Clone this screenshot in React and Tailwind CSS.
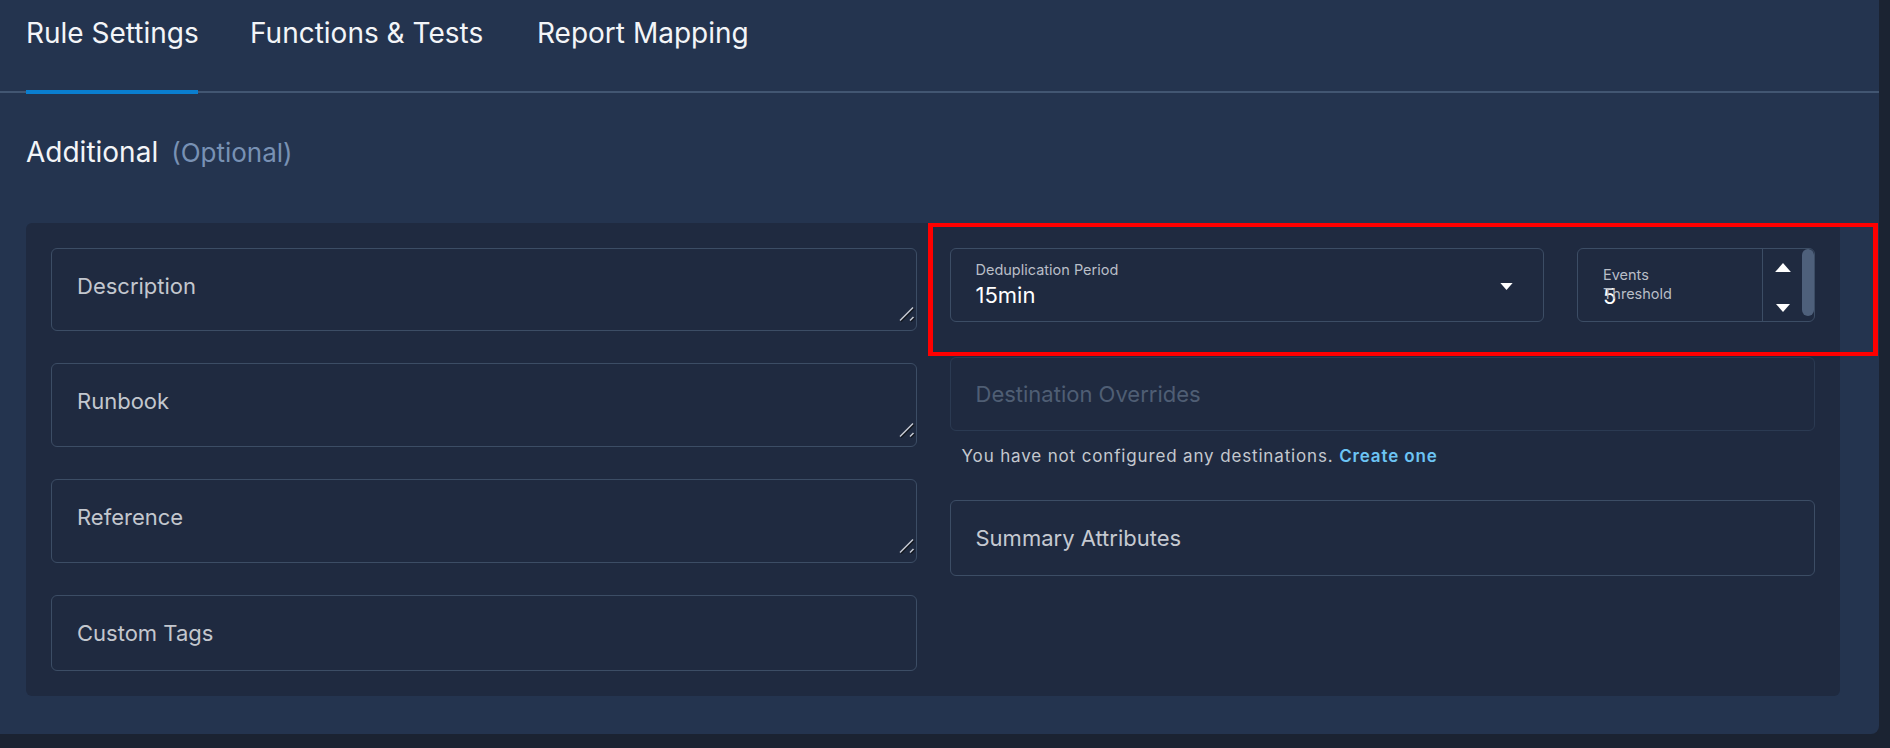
import React from "react";

const tabs = [
  { label: "Rule Settings", width: "w-[172px]", active: true },
  { label: "Functions & Tests", width: "w-[235px]" },
  { label: "Report Mapping", width: "w-[211px]" },
];

const ResizeHandle = () => (
  <svg
    className="absolute right-[2px] bottom-[9px] w-4 h-4 pointer-events-none"
    viewBox="0 0 16 16"
  >
    <path d="M2 15.5 L15 2.5 M12 15.5 L15.5 12" stroke="#11151c" strokeWidth="1.5" />
    <path d="M1 14.5 L14 1.5 M11 14.5 L14.5 11" stroke="#c4c8d0" strokeWidth="1.5" />
  </svg>
);

const TextAreaField = ({ placeholder, height = "h-[83px]" }) => (
  <div className={`relative ${height}`}>
    <textarea
      placeholder={placeholder}
      className="w-full h-full resize-none bg-transparent border border-[#3c4d65] rounded-md px-[25px] pt-[24px] text-[22px] leading-[26px] text-white placeholder:text-[#c3c7ce] outline-none"
    />
    <ResizeHandle />
  </div>
);

const Caret = ({ up, className = "" }) => (
  <svg viewBox="0 0 14 8" className={className} fill="#ffffff">
    {up ? <path d="M0 8 L7 0 L14 8 Z" /> : <path d="M0 0 L14 0 L7 8 Z" />}
  </svg>
);

export default function App() {
  return (
    <div className="relative min-h-screen bg-[#1b2332] font-['Inter',sans-serif]">
      <div className="w-[1879px] h-[734px] bg-[#24344f] rounded-br-lg">
        {/* Tabs */}
        <nav className="flex gap-[52px] pl-[26px] h-[93px] border-b-2 border-[#425672]">
          {tabs.map((tab) => (
            <a
              key={tab.label}
              className={`relative block ${tab.width} h-[91px] pt-[17px] text-[28px] leading-[32px] whitespace-nowrap text-[#f3f5f8] cursor-pointer`}
            >
              {tab.label}
              {tab.active && (
                <span className="absolute left-0 top-[90px] w-full h-1 bg-[#0a7ecf]" />
              )}
            </a>
          ))}
        </nav>

        {/* Heading */}
        <div className="flex items-baseline pl-[26px] mt-[43px]">
          <h2 className="text-[28px] leading-[32px] text-[#f3f5f8]">Additional</h2>
          <span className="ml-[13px] text-[26px] leading-[32px] text-[#7891b4]">(Optional)</span>
        </div>

        {/* Card */}
        <div className="ml-[26px] mt-[54px] w-[1814px] h-[473px] bg-[#1f2a40] rounded-md p-[25px] grid grid-cols-2 gap-x-[33px] items-start">
          {/* Left column */}
          <div className="flex flex-col gap-8">
            <TextAreaField placeholder="Description" />
            <TextAreaField placeholder="Runbook" height="h-[84px]" />
            <TextAreaField placeholder="Reference" height="h-[84px]" />
            <input
              type="text"
              placeholder="Custom Tags"
              className="h-[76px] bg-transparent border border-[#3c4d65] rounded-md px-[25px] text-[22px] text-white placeholder:text-[#c3c7ce] outline-none"
            />
          </div>

          {/* Right column */}
          <div className="flex flex-col">
            <div className="flex gap-[33px] h-[74px]">
              {/* Deduplication Period */}
              <div className="flex-1 flex border border-[#3c4d65] rounded-md">
                <div className="flex-1 pt-[13px] pl-[25px]">
                  <p className="text-[14.5px] leading-[16px] text-[#b9bec7]">Deduplication Period</p>
                  <p className="mt-[5px] text-[22px] leading-[24px] text-white">15min</p>
                </div>
                <Caret className="w-[13px] h-[7px] self-center mt-[3px] mr-[30px]" />
              </div>

              {/* Events Threshold */}
              <div className="w-[238px] flex border border-[#3c4d65] rounded-md overflow-hidden">
                <div className="relative flex-1">
                  <p className="pl-[25px] pt-[35px] text-[22px] leading-[24px] text-white">5</p>
                  <span className="absolute left-[25px] top-[16px] w-[80px] text-[14.5px] leading-[19px] text-[#b9bec7]">
                    Events Threshold
                  </span>
                </div>
                <div className="w-[52px] flex border-l border-[#3c4d65]">
                  <div className="w-[39px] flex flex-col items-center justify-between pt-[14px] pb-[9px]">
                    <Caret up className="w-[16px] h-[9px]" />
                    <Caret className="w-[16px] h-[8px]" />
                  </div>
                  <div className="w-[12px]">
                    <div className="h-[67px] bg-[#4e607b] rounded-full" />
                  </div>
                </div>
              </div>
            </div>

            <div className="mt-[35px] h-[74px] flex items-center px-[25px] border border-[#2b3a52] rounded-md text-[22px] text-[#4f5e74]">
              Destination Overrides
            </div>

            <p className="mt-[13px] pl-[12px] text-[17px] leading-[24px] tracking-[0.85px] text-[#c4c8cf]">
              You have not configured any destinations.{" "}
              <a className="font-semibold text-[#6cc4f4] cursor-pointer">Create one</a>
            </p>

            <div className="mt-[32px] h-[76px] flex items-center px-[25px] border border-[#3c4d65] rounded-md text-[22px] text-[#c5c9d1]">
              Summary Attributes
            </div>
          </div>
        </div>
      </div>

      {/* Highlight annotation */}
      <div className="absolute left-[928px] top-[223px] w-[950px] h-[133px] border-x-[5px] border-y-4 border-[#ff0000] pointer-events-none" />
    </div>
  );
}
